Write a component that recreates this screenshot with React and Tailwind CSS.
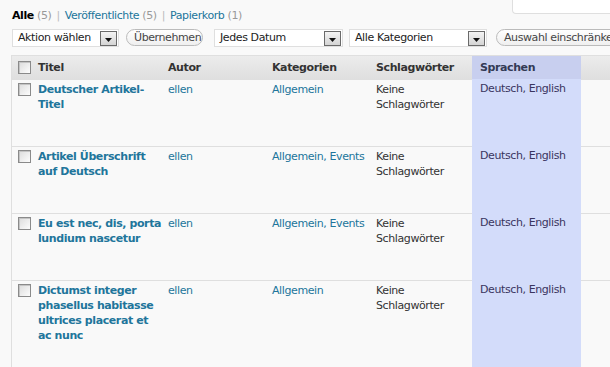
import React from 'react';

const posts = [
  { title: ['Deutscher Artikel-', 'Titel'], cats: 'Allgemein' },
  { title: ['Artikel Überschrift', 'auf Deutsch'], cats: 'Allgemein, Events' },
  { title: ['Eu est nec, dis, porta', 'lundium nascetur'], cats: 'Allgemein, Events' },
  { title: ['Dictumst integer', 'phasellus habitasse', 'ultrices placerat et', 'ac nunc'], cats: 'Allgemein' },
];

const Checkbox = () => (
  <span className="block w-[13px] h-[13px] border border-[#8a8a8a] bg-gradient-to-br from-[#dcdcdc] to-[#fdfdfd] shadow-[inset_1px_1px_0_#c4c4c4]"></span>
);

const Select = ({ label, width }) => (
  <div className={`flex shrink-0 items-center justify-between h-[18px] border border-[#dfdfdf] bg-white pl-[5px] pr-[1px] ${width}`}>
    <span className="text-[#222]">{label}</span>
    <span className="flex items-end justify-center w-[17px] h-[15px] border border-[#6a6a6a] bg-gradient-to-b from-[#f4f4f4] to-[#d4d4d4] pb-[3px]">
      <svg width="7" height="4" viewBox="0 0 7 4"><path d="M0 0h7L3.5 4z" fill="#111" /></svg>
    </span>
  </div>
);

const Button = ({ label, width }) => (
  <button className={`shrink-0 h-[17px] rounded-full border border-[#bbb] bg-gradient-to-b from-white to-[#efefef] px-[7px] leading-[15px] text-[#464646] whitespace-nowrap text-left ${width}`}>
    {label}
  </button>
);

export default function App() {
  return (
    <div className="relative w-[610px] h-[367px] overflow-hidden bg-[#f9f9f9] text-[11px] tracking-[-0.4px] text-[#333] font-['DejaVu_Sans',Verdana,sans-serif]">
      <div className="absolute right-0 top-0 w-[98px] h-[14px] bg-white border-l border-b border-[#dfdfdf] rounded-bl-[4px]"></div>

      <div className="pl-[12px] pt-[8px] h-[29px] leading-[15px] whitespace-nowrap">
        <span className="font-bold text-black">Alle</span> <span className="text-[#999]">(5)</span>
        <span className="text-[#bbb] mx-[5px]">|</span>
        <span className="text-[#21759b]">Veröffentlichte</span> <span className="text-[#999]">(5)</span>
        <span className="text-[#bbb] mx-[5px]">|</span>
        <span className="text-[#21759b]">Papierkorb</span> <span className="text-[#999]">(1)</span>
      </div>

      <div className="flex items-center pl-[12px] h-[18px] whitespace-nowrap">
        <Select label="Aktion wählen" width="w-[107px]" />
        <div className="ml-[7px] shrink-0"><Button label="Übernehmen" width="w-[77px] text-center" /></div>
        <div className="ml-[11px] shrink-0"><Select label="Jedes Datum" width="w-[129px]" /></div>
        <div className="ml-[6px] shrink-0"><Select label="Alle Kategorien" width="w-[138px]" /></div>
        <div className="ml-[9px] shrink-0"><Button label="Auswahl einschränken" width="w-[140px]" /></div>
      </div>

      <div className="ml-[11px] mt-[8px] w-[640px] border-l border-t border-[#dfdfdf]">
        <div className="grid grid-cols-[22px_130px_104px_104px_100px_109px_1fr] h-[23px] bg-gradient-to-b from-[#ececec] to-[#dfdfdf] font-bold text-[#333] leading-[23px]">
          <div className="pl-[6px] flex items-center"><Checkbox /></div>
          <div className="pl-[4px]">Titel</div>
          <div className="pl-[4px]">Autor</div>
          <div className="pl-[4px]">Kategorien</div>
          <div className="pl-[4px]">Schlagwörter</div>
          <div className="pl-[8px] bg-[#c8cfef] text-[#333a55]">Sprachen</div>
          <div></div>
        </div>
        {posts.map((p, i) => (
          <div key={i} className={`grid grid-cols-[22px_130px_104px_104px_100px_109px_1fr] border-t border-[#dfdfdf] leading-[15px] ${i === posts.length - 1 ? 'h-[100px]' : 'h-[67px]'}`}>
            <div className="pl-[6px] pt-[3px]"><Checkbox /></div>
            <div className="pl-[4px] pt-[2px] font-bold text-[#21759b] whitespace-nowrap">
              {p.title.map((line, j) => (
                <div key={j}>{line}</div>
              ))}
            </div>
            <div className="pl-[4px] pt-[2px] text-[#21759b]">ellen</div>
            <div className="pl-[4px] pt-[2px] text-[#21759b]">{p.cats}</div>
            <div className="pl-[4px] pt-[2px]">Keine<br />Schlagwörter</div>
            <div className="pl-[8px] pt-[2px] bg-[#d3dcfa] text-[#3a3560] -mt-px">Deutsch, English</div>
            <div></div>
          </div>
        ))}
      </div>
    </div>
  );
}
